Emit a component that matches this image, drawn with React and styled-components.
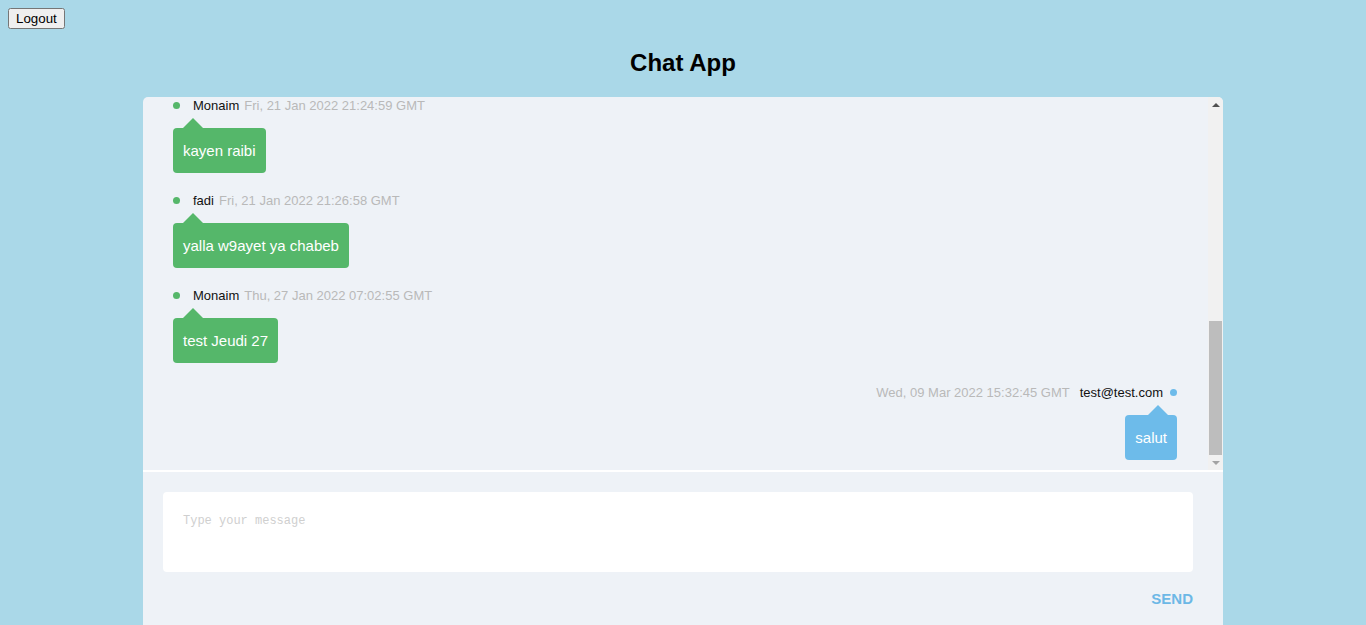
import { useLayoutEffect, useRef, useState } from "react";
import styled, { createGlobalStyle } from "styled-components";

const GlobalStyle = createGlobalStyle`
    body {
        margin: 8px;
        background: #aad8e8;
        font-family: "Liberation Sans", Arial, sans-serif;
    }
`

const messages = [
    { id: 1, user: "fadi", date: "Fri, 21 Jan 2022 21:02:40 GMT", text: "salam" },
    { id: 2, user: "Monaim", date: "Fri, 21 Jan 2022 21:05:17 GMT", text: "ahla" },
    { id: 3, user: "fadi", date: "Fri, 21 Jan 2022 21:10:03 GMT", text: "chnowa jawek" },
    { id: 4, user: "Monaim", date: "Fri, 21 Jan 2022 21:14:36 GMT", text: "labes" },
    { id: 5, user: "fadi", date: "Fri, 21 Jan 2022 21:19:21 GMT", text: "test" },
    { id: 6, user: "Monaim", date: "Fri, 21 Jan 2022 21:22:08 GMT", text: "mrigel" },
    { id: 7, user: "Monaim", date: "Fri, 21 Jan 2022 21:24:59 GMT", text: "kayen raibi" },
    { id: 8, user: "fadi", date: "Fri, 21 Jan 2022 21:26:58 GMT", text: "yalla w9ayet ya chabeb" },
    { id: 9, user: "Monaim", date: "Thu, 27 Jan 2022 07:02:55 GMT", text: "test Jeudi 27" },
    { id: 10, user: "test@test.com", date: "Wed, 09 Mar 2022 15:32:45 GMT", text: "salut", mine: true },
]

const ARROW = 15

const App = () => {

    const listRef = useRef(null)
    const [ thumb, setThumb ] = useState({ top: 0, height: 0 })

    const updateThumb = () => {
        const list = listRef.current
        if (!list) return
        const track = list.clientHeight - ARROW * 2
        const height = Math.round(track * list.clientHeight / list.scrollHeight)
        const top = Math.round(track * list.scrollTop / list.scrollHeight)
        setThumb({ top, height })
    }

    useLayoutEffect(() => {
        const list = listRef.current
        if (list) list.scrollTop = list.scrollHeight
        updateThumb()
    }, [])

    return (
        <>
            <GlobalStyle />
            <LogoutButton>Logout</LogoutButton>
            <Title>Chat App</Title>
            <ChatCard>
                <ListArea>
                    <MessageList ref={listRef} onScroll={updateThumb}>
                        {messages.map((m) => (
                            <Message key={m.id} $mine={m.mine}>
                                <MessageHeader $mine={m.mine}>
                                    <Dot $mine={m.mine} />
                                    <UserName>{m.user}</UserName>
                                    <DateText>{m.date}</DateText>
                                </MessageHeader>
                                <Bubble $mine={m.mine}>{m.text}</Bubble>
                            </Message>
                        ))}
                    </MessageList>
                    <ScrollTrack>
                        <ScrollArrow $up $color="#505050" />
                        <ThumbRail>
                            <Thumb style={{ marginTop: thumb.top, height: thumb.height }} />
                        </ThumbRail>
                        <ScrollArrow $color="#a3a3a3" />
                    </ScrollTrack>
                </ListArea>
                <Form onSubmit={(e) => e.preventDefault()}>
                    <TextArea placeholder="Type your message" />
                    <Actions>
                        <SendButton type="submit">Send</SendButton>
                    </Actions>
                </Form>
            </ChatCard>
        </>
    );
};

export default App;

const green = '#55b76a'
const blue = '#6dbbea'

const LogoutButton = styled.button`
    font-family: "Liberation Sans", Arial, sans-serif;
    font-size: 13.33px;
    height: 21px;
    padding: 1px 6px;
    display: block;
`

const Title = styled.h2`
    text-align: center;
    font-size: 24px;
    margin: 20px 0;
    line-height: 28px;
`

const ChatCard = styled.div`
    width: 1080px;
    margin: 0 auto;
    background: #eef2f7;
    border-radius: 5px;
    overflow: hidden;
`

const ListArea = styled.div`
    display: flex;
    height: 375px;
    box-sizing: border-box;
    border-bottom: 2px solid #ffffff;
`

const MessageList = styled.div`
    flex: 1;
    overflow-y: auto;
    padding: 10px 31px 10px 30px;
    scrollbar-width: none;

    &::-webkit-scrollbar {
        display: none;
    }
`

const ScrollTrack = styled.div`
    width: 15px;
    display: flex;
    flex-direction: column;
    background: #f1f1f1;
`

const ScrollArrow = styled.div`
    height: ${ARROW}px;
    display: flex;
    align-items: center;
    justify-content: center;

    &::before {
        content: "";
        border-left: 4px solid transparent;
        border-right: 4px solid transparent;
        ${(p) => (p.$up
            ? `border-bottom: 4px solid ${p.$color};`
            : `border-top: 4px solid ${p.$color};`)}
    }
`

const ThumbRail = styled.div`
    flex: 1;
    display: flex;
    flex-direction: column;
    padding: 0 1px;
`

const Thumb = styled.div`
    background: #bdbdbd;
`

const Message = styled.div`
    display: flex;
    flex-direction: column;
    align-items: ${(p) => (p.$mine ? 'flex-end' : 'flex-start')};
    margin-bottom: 19px;
    margin-top: ${(p) => (p.$mine ? '21px' : '0')};

    &:last-child {
        margin-bottom: 0;
    }
`

const MessageHeader = styled.div`
    display: flex;
    align-items: center;
    flex-direction: ${(p) => (p.$mine ? 'row-reverse' : 'row')};
    height: 16px;
    margin-bottom: 15px;
    font-size: 13px;
    gap: ${(p) => (p.$mine ? '10px' : '5px')};
`

const Dot = styled.span`
    width: 7px;
    height: 7px;
    border-radius: 50%;
    background: ${(p) => (p.$mine ? blue : green)};
    margin: ${(p) => (p.$mine ? '0 0 0 -3px' : '0 8px 0 0')};
`

const UserName = styled.span`
    color: #111;
`

const DateText = styled.span`
    color: #b9b9b9;
`

const Bubble = styled.div`
    position: relative;
    background: ${(p) => (p.$mine ? blue : green)};
    color: #fff;
    font-size: 15px;
    line-height: 19px;
    padding: 13px 10px;
    border-radius: 4px;

    &::before {
        content: "";
        position: absolute;
        top: -10px;
        ${(p) => (p.$mine ? 'right: 9px;' : 'left: 10px;')}
        border-left: 10px solid transparent;
        border-right: 10px solid transparent;
        border-bottom: 10px solid ${(p) => (p.$mine ? blue : green)};
    }
`

const Form = styled.form`
    padding: 20px 30px 30px 20px;
`

const TextArea = styled.textarea`
    display: block;
    width: 100%;
    height: 80px;
    box-sizing: border-box;
    border: none;
    border-radius: 4px;
    padding: 22px 20px 20px;
    resize: none;
    font-family: "Liberation Mono", "DejaVu Sans Mono", monospace;
    font-size: 12px;
    outline: none;

    &::placeholder {
        color: #cfcfcf;
    }
`

const Actions = styled.div`
    display: flex;
    justify-content: flex-end;
    margin-top: 18px;
`

const SendButton = styled.button`
    background: none;
    border: none;
    padding: 0;
    color: #6cb8e6;
    font-family: "Liberation Sans", Arial, sans-serif;
    font-size: 15px;
    font-weight: bold;
    text-transform: uppercase;
    cursor: pointer;
`
